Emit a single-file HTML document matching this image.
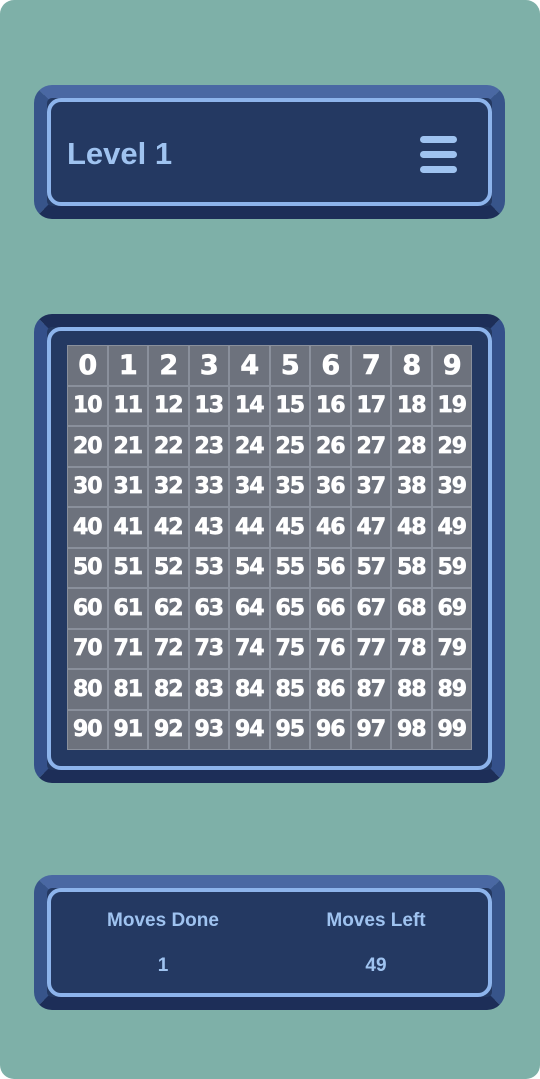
<!DOCTYPE html>
<html><head><style>
html,body{margin:0;padding:0;background:#fff;}
.page{position:relative;width:540px;height:1079px;background:#7eb0a8;border-radius:14px;overflow:hidden;font-family:"Liberation Sans",sans-serif;}
.panel{position:absolute;left:34px;width:471px;box-sizing:border-box;border:13px solid;border-color:#4a68a3 #37548a #1d2e58 #37548a;border-radius:18px;background:#243962;}
.inner{position:absolute;left:0;top:0;right:0;bottom:0;border:4px solid #8db4ec;border-radius:14px;background:#243962;}
.lvl{position:absolute;left:16px;top:34px;font-size:31px;font-weight:bold;color:#9fc3f0;}
.bar{position:absolute;left:369px;width:37px;height:7px;border-radius:4px;background:#9fc3f0;}
.grid{position:absolute;left:67px;top:345px;width:405px;height:405px;display:grid;grid-template-columns:repeat(10,1fr);grid-template-rows:repeat(10,1fr);background:#7a8090;}
.grid div{background:#6d727d;border:1px solid #8a909c;box-sizing:border-box;color:#fff;font-weight:bold;font-size:22px;display:flex;align-items:center;justify-content:center;letter-spacing:-1px;font-family:"DejaVu Sans","Liberation Sans",sans-serif;-webkit-text-stroke:0.7px #fff;}
.grid div.r0{font-size:27px;}
.lab{position:absolute;font-size:19px;font-weight:bold;color:#9fc3f0;transform:translateX(-50%);white-space:nowrap;}
</style></head><body><div class="page">
<div class="panel" style="top:85px;height:134px;"><div class="inner">
<div class="lvl">Level 1</div>
<div class="bar" style="top:34px"></div><div class="bar" style="top:49px"></div><div class="bar" style="top:64px"></div>
</div></div>
<div class="panel" style="top:314px;height:469px;border-color:#1d2e58 #34508a #1d2e58 #34508a;"><div class="inner"></div></div>
<div class="grid" id="g"></div>
<div class="panel" style="top:875px;height:135px;"><div class="inner"></div></div>
<div class="lab" style="left:163px;top:910px;">Moves Done</div>
<div class="lab" style="left:376px;top:910px;">Moves Left</div>
<div class="lab" style="left:163px;top:955px;">1</div>
<div class="lab" style="left:376px;top:955px;">49</div>
</div>
<script>
var g=document.getElementById('g'),h='';
for(var i=0;i<100;i++){h+='<div'+(i<10?' class="r0"':'')+'>'+i+'</div>';}
g.innerHTML=h;
</script>
</body></html>
